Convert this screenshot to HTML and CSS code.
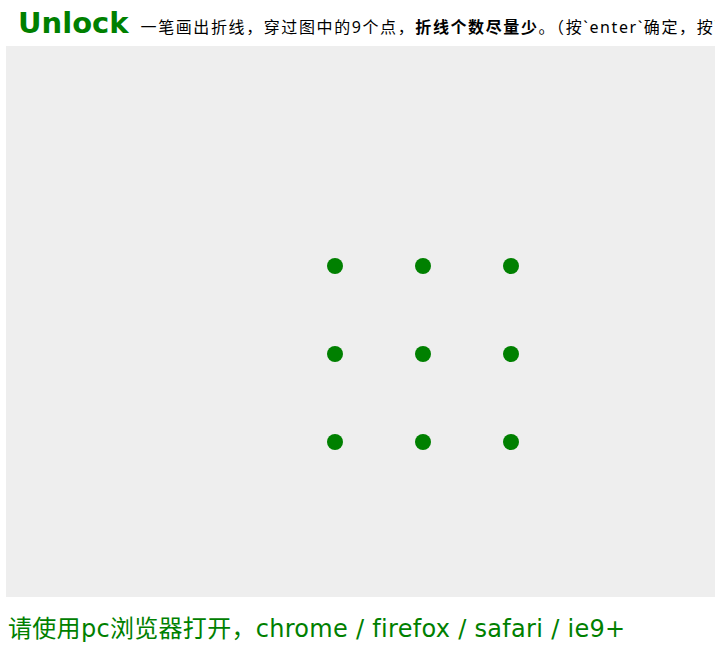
FILE: index.html
```html
<!DOCTYPE html>
<html lang="zh">
<head>
    <meta charset="UTF-8">
    <title>Unlock</title>
    <link rel="stylesheet" href="styles.css">
</head>
<body>
<div class="header">
    <span class="title">Unlock</span>
    <span class="intro">一笔画出折线，穿过图中的9个点，<b>折线个数尽量少</b>。（按`enter`确定，按`esc`重来）</span>
</div>

<svg class="board" width="709" height="551">
    <circle cx="329" cy="220" r="8"></circle>
    <circle cx="417" cy="220" r="8"></circle>
    <circle cx="505" cy="220" r="8"></circle>
    <circle cx="329" cy="308" r="8"></circle>
    <circle cx="417" cy="308" r="8"></circle>
    <circle cx="505" cy="308" r="8"></circle>
    <circle cx="329" cy="396" r="8"></circle>
    <circle cx="417" cy="396" r="8"></circle>
    <circle cx="505" cy="396" r="8"></circle>
</svg>

<div class="tip">请使用pc浏览器打开，chrome / firefox / safari / ie9+</div>
</body>
</html>
```

FILE: styles.css
```css
html, body {
    margin: 0;
    padding: 0;
    overflow: hidden;
}

body {
    font-family: "DejaVu Sans", "Noto Sans CJK SC", sans-serif;
    color: #000;
    background: #fff;
}

.header {
    height: 46px;
    padding-left: 18px;
    white-space: nowrap;
    overflow: hidden;
    display: flex;
    align-items: baseline;
}

.title {
    font-size: 29px;
    font-weight: bold;
    color: #008000;
    line-height: 46px;
    margin-right: 12px;
}

.intro {
    font-family: "Noto Sans", "Noto Sans CJK SC", sans-serif;
    font-size: 16px;
    letter-spacing: 1.6px;
}

.intro b {
    font-weight: bold;
}

.board {
    display: block;
    margin-left: 6px;
    background: #eeeeee;
}

.board circle {
    fill: #008000;
}

.tip {
    padding-left: 8px;
    margin-top: 12px;
    font-size: 24px;
    letter-spacing: 0.3px;
    color: #008000;
    white-space: nowrap;
}
```
